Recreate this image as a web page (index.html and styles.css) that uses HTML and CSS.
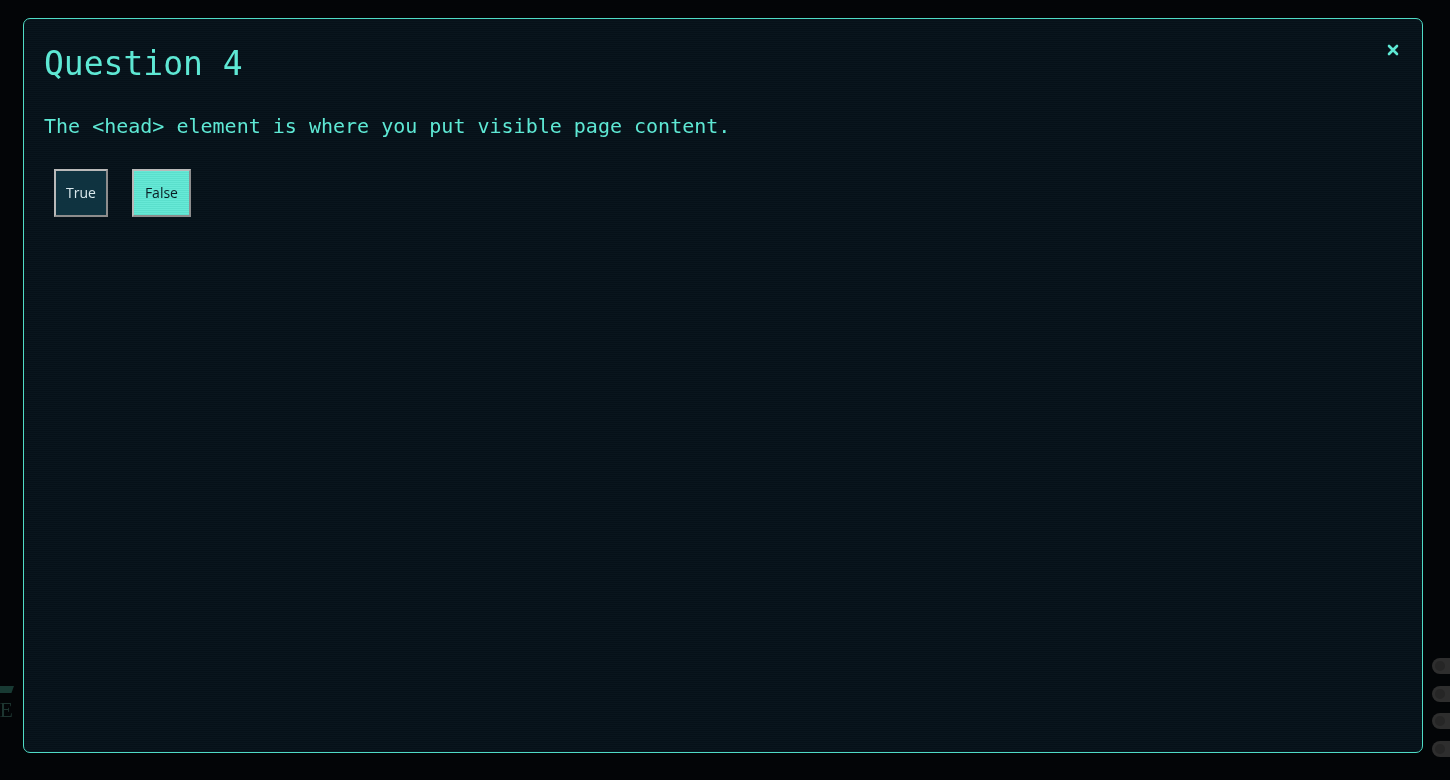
FILE: index.html
```html
<!DOCTYPE html>
<html lang="en">
<head>
<meta charset="utf-8">
<title>Question 4</title>
<link rel="stylesheet" href="styles.css">
</head>
<body>
<div class="backdrop">
  <div class="bg-logo">
    <span class="bg-bar"></span>
    <span class="bg-letter">SE</span>
  </div>
  <div class="bg-dots">
    <span class="dot"></span>
    <span class="dot"></span>
    <span class="dot"></span>
    <span class="dot"></span>
  </div>
</div>
<div class="overlay">
  <div class="modal">
    <button class="close" aria-label="Close">
      <svg width="12" height="12" viewBox="0 0 12 12"><path d="M2 2 L10 10 M10 2 L2 10" stroke="currentColor" stroke-width="2.6" stroke-linecap="round" fill="none"/></svg>
    </button>
    <h2 class="title">Question 4</h2>
    <p class="question">The &lt;head&gt; element is where you put visible page content.</p>
    <div class="answers">
      <button class="answer">True</button>
      <button class="answer selected">False</button>
    </div>
  </div>
</div>
</body>
</html>
```
FILE: styles.css
```css
html, body {
  margin: 0;
  height: 100%;
}
body {
  background: #030507;
  font-family: "DejaVu Sans Mono", monospace;
  overflow: hidden;
}
.backdrop {
  position: fixed;
  inset: 0;
}
.bg-logo {
  position: absolute;
  right: calc(100% - 13px);
  top: 686px;
  display: flex;
  flex-direction: column;
  align-items: flex-end;
}
.bg-bar {
  display: block;
  width: 32px;
  height: 7px;
  background: #183a33;
  clip-path: polygon(0 0, 100% 0, 92% 100%, 0 100%);
  margin-right: -1px;
}
.bg-letter {
  font-family: "Liberation Serif", serif;
  font-size: 22px;
  color: #1d3530;
  line-height: 24px;
  margin-top: 5px;
  white-space: nowrap;
}
.bg-dots {
  position: absolute;
  left: 1432px;
  top: 658px;
  display: flex;
  flex-direction: column;
  gap: 11.5px;
}
.dot {
  display: block;
  position: relative;
  width: 32px;
  height: 16px;
  border-radius: 8px;
  background: #2e2e2e;
}
.dot::after {
  content: "";
  position: absolute;
  left: 3px;
  top: 3px;
  width: 10px;
  height: 10px;
  border-radius: 50%;
  background: #262626;
}
.overlay {
  position: fixed;
  inset: 0;
  padding: 18px 27px 27px 23px;
  box-sizing: border-box;
  display: flex;
}
.modal {
  position: relative;
  flex: 1;
  box-sizing: border-box;
  border: 1px solid #4fdcc6;
  border-radius: 7px;
  padding: 20px;
  background-color: #06121a;
  background-image: repeating-linear-gradient(to bottom, rgba(255,255,255,0.012) 0, rgba(255,255,255,0.012) 1px, rgba(0,0,0,0.06) 1px, rgba(0,0,0,0.06) 2px);
  color: #5ee8d4;
}
.close {
  position: absolute;
  top: 25px;
  right: 23px;
  background: none;
  border: 0;
  color: #5ee8d4;
  padding: 0;
  width: 12px;
  height: 12px;
  display: flex;
  cursor: pointer;
}
.title {
  margin: 3px 0 0;
  font-size: 33px;
  font-weight: normal;
  line-height: 44px;
}
.question {
  margin: 27px 0 0;
  font-size: 20px;
  line-height: 26px;
}
.answers {
  margin-top: 20px;
  display: flex;
  gap: 4px;
}
.answer {
  margin: 10px;
  padding: 13px 10px;
  font-family: "Open Sans", "Noto Sans", sans-serif;
  font-size: 14px;
  line-height: 18px;
  height: 48px;
  border: 2px solid;
  border-color: #b9b9b9 #8d8d8d #8d8d8d #b9b9b9;
  background: #0f3340;
  color: #d9e8ec;
}
.answer.selected {
  padding: 13px 11px;
  background-color: #5ee8d4;
  background-image: repeating-linear-gradient(to bottom, rgba(255,255,255,0.06) 0, rgba(255,255,255,0.06) 1px, rgba(0,0,0,0.04) 1px, rgba(0,0,0,0.04) 2px);
  color: #0a1d24;
}
```
